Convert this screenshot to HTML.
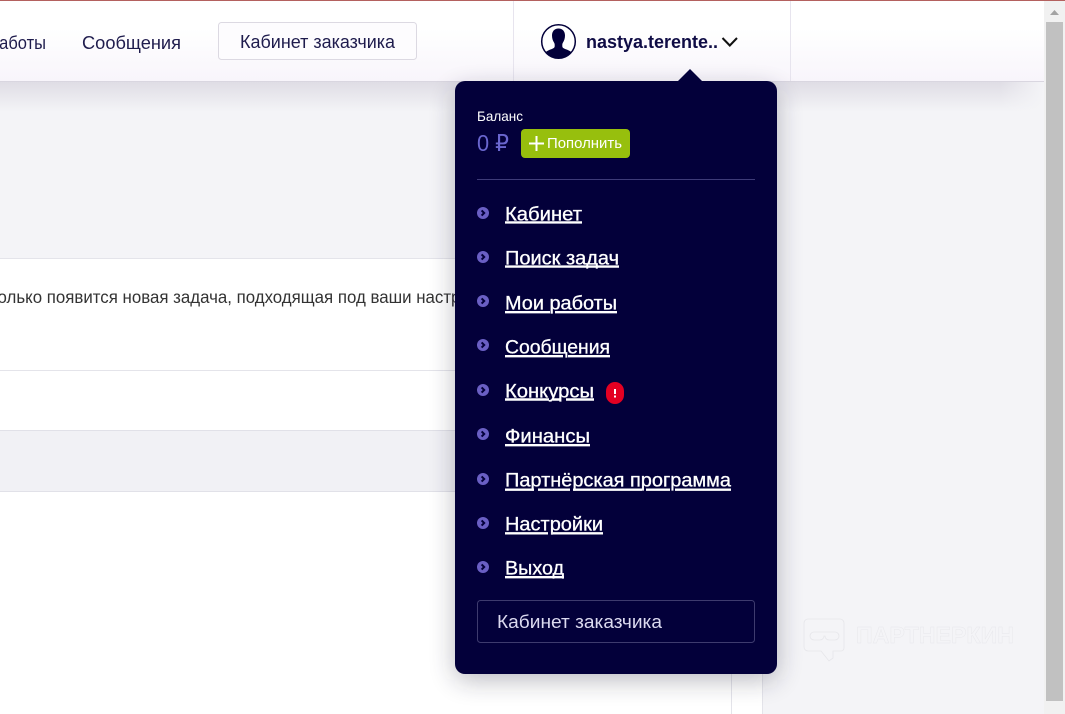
<!DOCTYPE html>
<html lang="ru">
<head>
<meta charset="utf-8">
<title>Кабинет</title>
<style>
html,body{margin:0;padding:0;width:1065px;height:714px;overflow:hidden;background:#f4f4f7}
svg{position:absolute;left:0;top:0;display:block}
text{font-family:"Liberation Sans","DejaVu Sans",sans-serif}
.m{font-size:19.5px;fill:#fff;stroke:#fff;stroke-width:.3px}
</style>
</head>
<body>
<svg width="1065" height="714" viewBox="0 0 1065 714" xmlns="http://www.w3.org/2000/svg">
<defs>
<linearGradient id="hd" x1="0" y1="0" x2="0" y2="1"><stop offset="0" stop-color="#fff"/><stop offset=".35" stop-color="#fff"/><stop offset="1" stop-color="#f8f5fb"/></linearGradient>
<linearGradient id="sh" x1="0" y1="0" x2="0" y2="1"><stop offset="0" stop-color="#dfdde5"/><stop offset="1" stop-color="#f4f4f7"/></linearGradient>
<linearGradient id="shx" x1="0" y1="0" x2="1" y2="0"><stop offset="0" stop-color="#f4f4f7" stop-opacity="0"/><stop offset="1" stop-color="#f4f4f7"/></linearGradient>
<filter id="blur" x="-20%" y="-20%" width="140%" height="140%"><feGaussianBlur stdDeviation="13"/></filter>
<clipPath id="av"><circle cx="558.5" cy="41.5" r="16.5"/></clipPath>
<g id="b"><circle r="6" fill="#6a5fc4"/><path d="M-1.4-2.6 1.2 0-1.4 2.6" fill="none" stroke="#03003a" stroke-width="2"/></g>
</defs>

<!-- main background and panels -->
<rect width="1044" height="714" fill="#f4f4f7"/>
<rect x="0" y="258" width="762" height="456" fill="#fff"/>
<rect x="0" y="258" width="762" height="1" fill="#e4e4ea"/>
<rect x="0" y="370" width="762" height="1" fill="#e4e4ea"/>
<rect x="0" y="430" width="762" height="61" fill="#f1f1f5"/>
<rect x="0" y="430" width="762" height="1" fill="#e1e1e8"/>
<rect x="0" y="491" width="762" height="1" fill="#e1e1e8"/>
<rect x="731" y="492" width="1" height="222" fill="#e4e4ea"/>
<rect x="762" y="258" width="1" height="456" fill="#e4e4ea"/>
<text x="-10" y="303" font-size="17.500" fill="#333" textLength="506" lengthAdjust="spacingAndGlyphs">только появится новая задача, подходящая под ваши настройки</text>

<!-- header shadow -->
<rect x="0" y="82" width="1044" height="30" fill="url(#sh)"/>
<rect x="1000" y="82" width="44" height="30" fill="url(#shx)"/>

<!-- header -->
<rect x="0" y="0" width="1044" height="81" fill="url(#hd)"/>
<rect x="0" y="81" width="1044" height="1" fill="#d9d6e0"/>
<rect x="0" y="0" width="1065" height="1" fill="#b4615f"/>
<rect x="513" y="1" width="1" height="80" fill="#e7e4ee"/>
<rect x="790" y="1" width="1" height="80" fill="#e7e4ee"/>
<text x="-10" y="49" font-size="18" fill="#1f1c4d" textLength="56" lengthAdjust="spacingAndGlyphs">работы</text>
<text x="82" y="49" font-size="18" fill="#1f1c4d" textLength="99" lengthAdjust="spacingAndGlyphs">Сообщения</text>
<rect x="218.500" y="22.500" width="198" height="37" rx="3" fill="#fdfcfe" stroke="#dcd9e2"/>
<text x="240" y="48" font-size="18" fill="#1f1c4d" textLength="155" lengthAdjust="spacingAndGlyphs">Кабинет заказчика</text>

<!-- avatar -->
<circle cx="558.500" cy="41.500" r="16.800" fill="#fff" stroke="#03003a" stroke-width="1.500"/>
<path clip-path="url(#av)" fill="#03003a" d="M558.500 28.500c-4 0-6.500 2.800-6.500 7 0 2.800.8 5.200 2 7 .5.800.7 1.500.7 2.400v1.400c0 1.300-1 2-2.800 2.700-2.800 1-6 2.100-7 4.500V60h27.200v-6.500c-1-2.400-4.200-3.500-7-4.500-1.800-.7-2.800-1.400-2.800-2.700v-1.400c0-.9.200-1.600.7-2.400 1.200-1.800 2-4.200 2-7 0-4.200-2.500-7-6.500-7z"/>
<text x="586" y="48" font-size="18" font-weight="700" fill="#0f0c45" textLength="132" lengthAdjust="spacingAndGlyphs">nastya.terente..</text>
<path d="M722.500 38 729.800 45.500 737 38" fill="none" stroke="#111" stroke-width="2"/>

<!-- scrollbar -->
<rect x="1044" y="1" width="21" height="713" fill="#f1f1f1"/>
<rect x="1046" y="22" width="17" height="679" fill="#c1c1c1"/>
<path d="M1054.500 10 1059 15H1050z" fill="#a3a3a3"/>

<!-- watermark -->
<g fill="none" stroke="#e6e6ea" stroke-width=".8">
<path d="M808 619H840a4 4 0 0 1 4 4V648a3 3 0 0 1-3 3H833V658L829 661 821 651H808a4 4 0 0 1-4-4V623a4 4 0 0 1 4-4z"/>
<path d="M814 632H835a4 4 0 0 1 0 8H829a4 4 0 0 1-4-4 4 4 0 0 1-1 0 4 4 0 0 1-4 4H814a4 4 0 0 1 0-8z"/>
<text x="856" y="643" font-size="23" font-weight="700" stroke="#e8e8ec" stroke-width=".5" textLength="158" lengthAdjust="spacingAndGlyphs">ПАРТНЕРКИН</text>
</g>

<!-- dropdown -->
<rect x="455" y="90" width="322" height="590" rx="10" fill="#1a1a33" opacity=".3" filter="url(#blur)"/>
<path d="M678 81 690 69 702 81z" fill="#03003a"/>
<rect x="455" y="81" width="322" height="593" rx="10" fill="#03003a"/>

<text x="477" y="121" font-size="14" fill="#fff" textLength="46" lengthAdjust="spacingAndGlyphs">Баланс</text>
<text x="477" y="151" font-size="23" fill="#6a66cf" textLength="32" lengthAdjust="spacingAndGlyphs">0 ₽</text>
<rect x="521" y="129" width="109" height="29" rx="4" fill="#97bf0d"/>
<path d="M529 143.500H544M536.500 136V151" stroke="#fff" stroke-width="2" fill="none"/>
<text x="547" y="148" font-size="14.500" fill="#fff" textLength="75" lengthAdjust="spacingAndGlyphs">Пополнить</text>
<rect x="477" y="179" width="278" height="1" fill="#3e3b78"/>

<g fill="none" stroke="#fff" stroke-width="2.400">
<path d="M505 222.400h77"/>
<path d="M505 266.600h114"/>
<path d="M505 312.200h45M555 312.200h62"/>
<path d="M505 356.200h58M568 356.200h42"/>
<path d="M505 399.500h44M553 399.500h8M566 399.500h28"/>
<path d="M505 445.200h85"/>
<path d="M505 489.700h29M538 489.700h32M573 489.700h69M646 489.700h24M675 489.700h56"/>
<path d="M505 533.300h43M553 533.300h50"/>
<path d="M505 577.200h59"/>
</g>

<use href="#b" x="483" y="213"/>
<text class="m" x="505" y="220.500" textLength="77" lengthAdjust="spacingAndGlyphs">Кабинет</text>
<use href="#b" x="483" y="257"/>
<text class="m" x="505" y="264.500" textLength="114" lengthAdjust="spacingAndGlyphs">Поиск задач</text>
<use href="#b" x="483" y="301"/>
<text class="m" x="505" y="309.500" textLength="112" lengthAdjust="spacingAndGlyphs">Мои работы</text>
<use href="#b" x="483" y="345"/>
<text class="m" x="505" y="353.500" textLength="105" lengthAdjust="spacingAndGlyphs">Сообщения</text>
<use href="#b" x="483" y="390"/>
<text class="m" x="505" y="397.500" textLength="89" lengthAdjust="spacingAndGlyphs">Конкурсы</text>
<rect x="606" y="382" width="18" height="22" rx="9" fill="#e30022"/>
<path d="M615 389v5M615 395.500v2" stroke="#fff" stroke-width="2" fill="none"/>
<use href="#b" x="483" y="434"/>
<text class="m" x="505" y="442.500" textLength="85" lengthAdjust="spacingAndGlyphs">Финансы</text>
<use href="#b" x="483" y="479"/>
<text class="m" x="505" y="486.500" textLength="226" lengthAdjust="spacingAndGlyphs">Партнёрская программа</text>
<use href="#b" x="483" y="523"/>
<text class="m" x="505" y="530.500" textLength="98" lengthAdjust="spacingAndGlyphs">Настройки</text>
<use href="#b" x="483" y="567"/>
<text class="m" x="505" y="574.500" textLength="59" lengthAdjust="spacingAndGlyphs">Выход</text>

<rect x="477.500" y="600.500" width="277" height="42" rx="3" fill="none" stroke="#3e3b6e"/>
<text x="497" y="628" font-size="18" fill="#dcdaf0" textLength="165" lengthAdjust="spacingAndGlyphs">Кабинет заказчика</text>
</svg>
</body>
</html>
